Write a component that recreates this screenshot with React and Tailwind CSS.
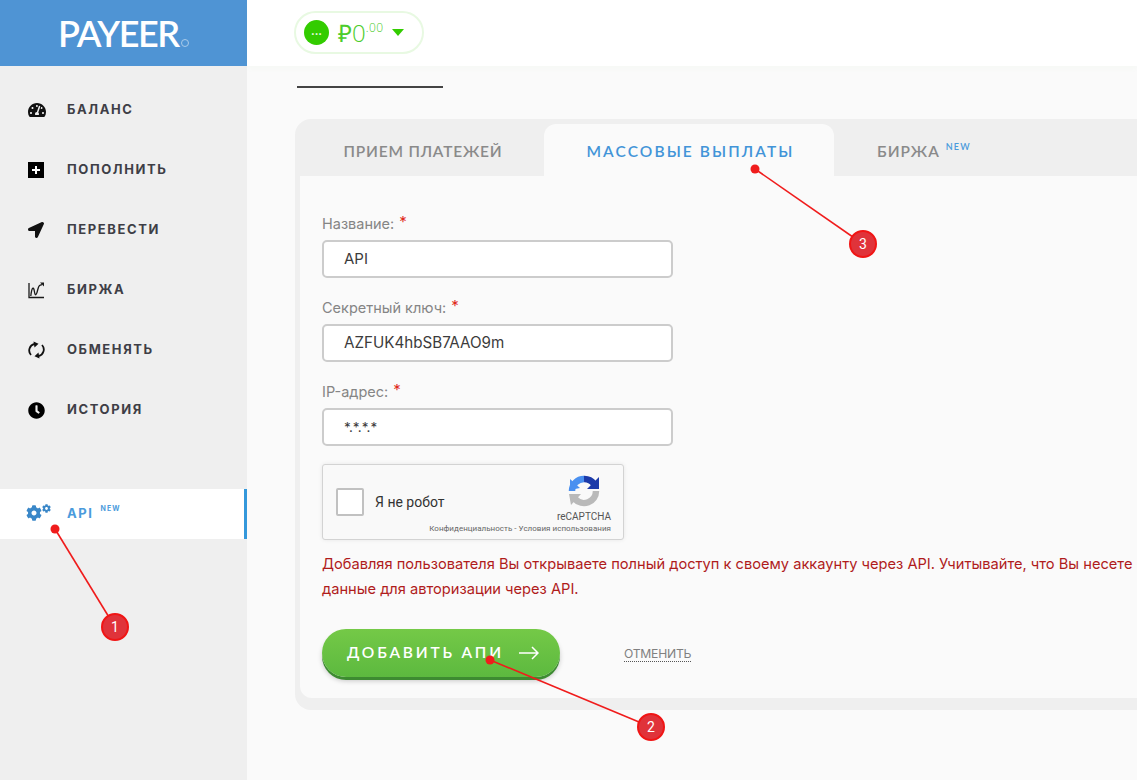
import { FaTachometerAlt, FaLocationArrow, FaClock, FaCog } from 'react-icons/fa';

const PlusIcon = () => (
  <svg width="16" height="16" viewBox="0 0 16 16">
    <rect width="16" height="16" fill="#000" />
    <path d="M7 4h2v3h3v2H9v3H7V9H4V7h3z" fill="#fff" />
  </svg>
);

const ChartIcon = () => (
  <svg width="16" height="17" viewBox="0 0 16 17" fill="none" stroke="#1a1a1a" strokeWidth="1.3">
    <path d="M1 1v14.5h15" />
    <path d="M2.8 14 C3.8 5 5.6 4 6.4 9.5 S8.6 13 9.8 7.5 S11.5 4 14 2.5" />
    <path d="M12 0.5h4v4z" fill="#1a1a1a" stroke="none" />
  </svg>
);

const SyncIcon = () => (
  <svg width="17" height="18" viewBox="0 0 17 18" fill="none" stroke="#111" strokeWidth="1.8">
    <path d="M3 14 A6.8 6.8 0 0 1 6.5 2.8" />
    <path d="M14 4 A6.8 6.8 0 0 1 10.5 15.2" />
    <path d="M5.5 0.5 L10.5 2.8 L6.5 6.5z" fill="#111" stroke="none" />
    <path d="M11.5 17.5 L6.5 15.2 L10.5 11.5z" fill="#111" stroke="none" />
  </svg>
);

const menu = [
  { label: 'БАЛАНС', icon: <FaTachometerAlt size={18} color="#111" /> },
  { label: 'ПОПОЛНИТЬ', icon: <PlusIcon /> },
  { label: 'ПЕРЕВЕСТИ', icon: <FaLocationArrow size={16} color="#111" /> },
  { label: 'БИРЖА', icon: <ChartIcon /> },
  { label: 'ОБМЕНЯТЬ', icon: <SyncIcon /> },
  { label: 'ИСТОРИЯ', icon: <FaClock size={17} color="#000" /> },
];

const fields = [
  { label: 'Название:', value: 'API', size: 'text-[15px]' },
  { label: 'Секретный ключ:', value: 'AZFUK4hbSB7AAO9m', size: 'text-[15.2px]' },
  { label: 'IP-адрес:', value: '*.*.*.*', size: 'text-[13.5px]' },
];

const Sidebar = () => (
  <aside className="w-[247px] shrink-0 bg-[#efefef]">
    <div className="h-[66px] bg-[#4f94d4] flex items-center pl-[58px]">
      <span className="text-white text-[36px] leading-none font-semibold tracking-[-1.5px] font-['Lato',sans-serif]">PAYEER</span>
      <span className="w-[8px] h-[8px] rounded-full border border-[#a9cbea] ml-[2px] mt-[19px]" />
    </div>
    <nav className="pt-[14px]">
      {menu.map((item) => (
        <div key={item.label} className="h-[60px] flex items-center">
          <span className="w-[67px] pl-[28px] shrink-0 flex">{item.icon}</span>
          <span className="text-[13px] font-bold tracking-[1.6px] text-[#3e3e46] font-['Inter',sans-serif]">{item.label}</span>
        </div>
      ))}
    </nav>
    <div className="mt-[49px] h-[50px] bg-white border-r-[3px] border-[#3498db] flex items-center">
      <span className="w-[67px] pl-[26px] shrink-0 flex items-start pb-[2px]">
        <FaCog size={16} color="#3a87c8" />
        <FaCog size={9} color="#3a87c8" className="-mt-[1px]" />
      </span>
      <span className="text-[13px] font-bold tracking-[1.6px] text-[#4a9bdc] font-['Inter',sans-serif]">API</span>
      <span className="ml-[7px] mb-[9px] text-[7px] font-bold tracking-[1px] text-[#4a9bdc] font-['Inter',sans-serif]">NEW</span>
    </div>
  </aside>
);

const Balance = () => (
  <div className="ml-[47px] w-[130px] h-[43px] mt-[11px] rounded-full border-2 border-[#e8f9e2] flex items-center pl-[8px]">
    <span className="w-[25px] h-[25px] rounded-full bg-[#33cc00] flex items-center justify-center text-white text-[11px] font-bold leading-none pb-[3px] font-['Inter',sans-serif]">...</span>
    <span className="ml-[9px] text-[24px] leading-none text-[#4ccc2c] font-light font-['Open_Sans',sans-serif]">₽0</span>
    <span className="text-[12px] leading-none font-light tracking-[0.4px] text-[#4ccc2c] mb-[10px] font-['Open_Sans',sans-serif]">.00</span>
    <span className="ml-[9px] w-0 h-0 border-x-[6px] border-x-transparent border-t-[7px] border-t-[#33cc00]" />
  </div>
);

const Field = ({ label, value, size }) => (
  <div className="mb-[20px]">
    <div className="h-[26px] flex items-start text-[14.5px] text-[#858585] font-['Inter',sans-serif] leading-[20px]">
      {label}
      <span className="ml-[5px] text-[#e02a1a] text-[15px] leading-[16px]">*</span>
    </div>
    <div className={`w-[351px] h-[38px] bg-white border-2 border-[#cccccc] rounded-[5px] pl-[20px] flex items-center text-[#3c3c3c] font-['Inter',sans-serif] ${size}`}>
      {value}
    </div>
  </div>
);

const Captcha = () => (
  <div className="-mt-[2px] w-[302px] h-[76px] bg-[#f9f9f9] border border-[#d3d3d3] rounded-[3px] shadow-[0_0_4px_rgba(0,0,0,0.08)] relative flex items-center font-['Roboto',sans-serif]">
    <span className="ml-[13px] w-[28px] h-[28px] bg-white border-2 border-[#c1c1c1] rounded-[2px]" />
    <span className="ml-[11px] text-[14px] text-[#333]">Я не робот</span>
    <div className="absolute right-[12px] top-[10px] flex flex-col items-end">
      <svg width="32" height="32" viewBox="0 0 32 32" className="mr-[11px]" fill="none" strokeWidth="6.5">
        <path d="M16 4 A12 12 0 0 0 4 16" stroke="#4a90f0" />
        <path d="M2 4 L12 13 L2 15z" fill="#4a90f0" />
        <path d="M16 4 A12 12 0 0 1 26 9" stroke="#1c3aa9" />
        <path d="M31 2 L31 14 L19 14z" fill="#1c3aa9" />
        <path d="M28 16 A12 12 0 0 1 7 24" stroke="#b9b9b9" />
        <path d="M1 19 L13 19 L3 30z" fill="#b9b9b9" />
      </svg>
      <span className="text-[10px] leading-[12px] text-[#555] mt-[4px]">reCAPTCHA</span>
    </div>
    <span className="absolute right-[12px] bottom-[5px] text-[8px] leading-[10px] tracking-[0.03px] text-[#666] whitespace-nowrap">Конфиденциальность - Условия использования</span>
  </div>
);

const Card = () => (
  <section className="mt-[31px] ml-[48px] h-[591px] bg-[#efefef] rounded-l-[16px] pl-[5px] pt-[5px] pb-[12px] flex flex-col">
    <div className="h-[52px] flex items-stretch shrink-0 text-[15.5px] font-['Lato',sans-serif] font-semibold">
      <div className="w-[244px] pt-[4px] flex items-center justify-center text-[#8a8a8a] tracking-[0.8px] pl-[2px]">ПРИЕМ ПЛАТЕЖЕЙ</div>
      <div className="w-[290px] pt-[4px] pl-[3px] flex items-center justify-center text-[#4294d8] bg-[#fafafa] rounded-t-[12px] tracking-[2.1px]">МАССОВЫЕ ВЫПЛАТЫ</div>
      <div className="flex items-center pt-[4px] pl-[43px] text-[#8a8a8a] tracking-[1px]">
        БИРЖА
        <span className="ml-[6px] mb-[10px] text-[9px] tracking-[1.2px] text-[#4a9bdc]">NEW</span>
      </div>
    </div>
    <div className="flex-1 bg-[#fafafa] rounded-bl-[12px] pl-[22px] pt-[38px]">
      {fields.map((f) => (
        <Field key={f.label} label={f.label} value={f.value} size={f.size} />
      ))}
      <Captcha />
      <p className="mt-[12px] text-[14.65px] leading-[25px] text-[#b01c1c] whitespace-nowrap font-['Inter',sans-serif]">
        Добавляя пользователя Вы открываете полный доступ к своему аккаунту через API. Учитывайте, что Вы несете
        <br />
        данные для авторизации через API.
      </p>
      <div className="mt-[27px] flex items-center">
        <button className="w-[238px] h-[48px] rounded-full bg-gradient-to-b from-[#74c947] to-[#5cb93f] shadow-[0_3px_0_#3d8b31,0_4px_5px_rgba(0,0,0,0.2)] flex items-center pl-[25px] text-white text-[15.5px] font-semibold tracking-[2.8px] font-['Lato',sans-serif]">
          ДОБАВИТЬ АПИ
          <svg width="20" height="14" viewBox="0 0 20 14" fill="none" stroke="white" strokeWidth="1.5" className="ml-[15px]">
            <path d="M0 7h19M13 1l6 6-6 6" />
          </svg>
        </button>
        <span className="ml-[64px] mt-[2px] text-[12.2px] tracking-[-0.25px] text-[#808080] border-b border-dotted border-[#555] leading-[15px] font-['Inter',sans-serif]">ОТМЕНИТЬ</span>
      </div>
    </div>
  </section>
);

const Marker = ({ x1, y1, x2, y2, n }) => (
  <g>
    <line x1={x1} y1={y1} x2={x2} y2={y2} stroke="#f01c1c" strokeWidth="1.6" />
    <circle cx={x1} cy={y1} r="4.5" fill="#f01c1c" />
    <circle cx={x2} cy={y2} r="13" fill="#e0333a" stroke="#f01515" strokeWidth="2" />
    <text x={x2} y={y2 + 5} textAnchor="middle" fontSize="14" fill="white" fontFamily="Roboto, sans-serif">{n}</text>
  </g>
);

const App = () => (
  <div className="relative flex w-[1137px] h-[780px] overflow-hidden bg-[#fafafa]">
    <Sidebar />
    <main className="flex-1 min-w-0">
      <header className="h-[66px] bg-white flex items-start shadow-[0_2px_6px_rgba(120,200,100,0.04)]">
        <Balance />
      </header>
      <div className="ml-[50px] mt-[20px] w-[146px] h-[2px] bg-[#444]" />
      <Card />
    </main>
    <svg width="1137" height="780" className="absolute inset-0 pointer-events-none">
      <Marker x1={55} y1={529} x2={115} y2={627} n="1" />
      <Marker x1={490} y1={660} x2={651} y2={727} n="2" />
      <Marker x1={755} y1={169} x2={863} y2={244} n="3" />
    </svg>
  </div>
);

export default App;
